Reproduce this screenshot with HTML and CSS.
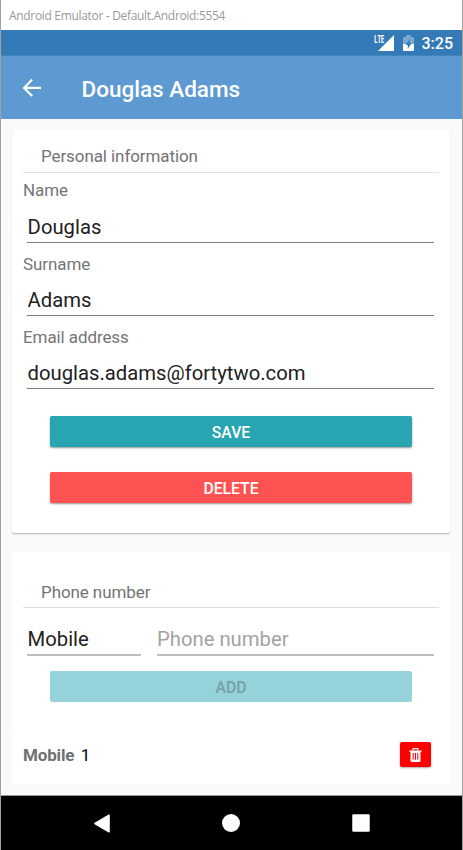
FILE: index.html
```html
<!DOCTYPE html>
<html lang="en">
<head>
<meta charset="utf-8">
<title>Android Emulator - Default.Android:5554</title>
<link rel="stylesheet" href="styles.css">
</head>
<body>
<div class="window">
  <div class="titlebar"><span class="titlebar-text">Android Emulator - Default.Android:5554</span></div>
  <div class="statusbar">
    <span class="signal">
      <svg class="signal-icon" width="17" height="17" viewBox="0 0 17 17"><path d="M17 1v16H1z" fill="#fff"/></svg>
      <span class="lte">LTE</span>
    </span>
    <svg class="battery" width="11" height="16" viewBox="0 0 11 16">
      <path d="M3 0h5v2h2a1 1 0 0 1 1 1v6H0V3a1 1 0 0 1 1-1h2z" fill="#7aa8d1"/>
      <path d="M0 9h11v6a1 1 0 0 1-1 1H1a1 1 0 0 1-1-1z" fill="#fff"/>
      <path d="M6.6 4L2.6 10h2.2v4l3.8-6H6.6z" fill="#337ab7"/>
    </svg>
    <span class="clock">3:25</span>
  </div>
  <header class="appbar">
    <svg class="back" width="20" height="20" viewBox="0 0 20 20"><path d="M10.2 1.4L2 9.9l8.2 8.2M2.2 9.9H19" fill="none" stroke="#fff" stroke-width="2.1"/></svg>
    <h1 class="title">Douglas Adams</h1>
  </header>
  <main class="content">
    <section class="card personal">
      <h2 class="heading">Personal information</h2>
      <label class="field"><span class="label">Name</span><input class="input" value="Douglas"></label>
      <label class="field"><span class="label">Surname</span><input class="input" value="Adams"></label>
      <label class="field"><span class="label">Email address</span><input class="input" value="douglas.adams@fortytwo.com"></label>
      <button class="button save">SAVE</button>
      <button class="button delete">DELETE</button>
    </section>
    <section class="card phone">
      <h2 class="heading">Phone number</h2>
      <div class="phone-row">
        <input class="input type" value="Mobile">
        <input class="input number" placeholder="Phone number">
      </div>
      <button class="button add" disabled>ADD</button>
    </section>
    <div class="entry">
      <span class="entry-type">Mobile</span>
      <span class="entry-number">1</span>
      <button class="trash" aria-label="Remove">
        <svg width="13" height="14" viewBox="0 0 13 14">
          <path d="M4 2.6V1.2Q4 .6 4.6.6h3.8q.6 0 .6.6v1.4" fill="none" stroke="#fff" stroke-width="1.2"/>
          <path d="M.3 2.5h12.4v1.3h-1.2v8.6q0 1.6-1.6 1.6H3.1q-1.6 0-1.6-1.6V3.8H.3z" fill="#fff"/>
          <path d="M4.2 5v6.8M6.5 5v6.8M8.8 5v6.8" stroke="#f00" stroke-width="1"/>
        </svg>
      </button>
    </div>
  </main>
  <nav class="navbar">
    <svg width="16" height="19" viewBox="0 0 16 19"><path d="M15 1.2v16.6L1 9.5z" fill="#fff" stroke="#fff" stroke-width="1.6" stroke-linejoin="round"/></svg>
    <svg width="19" height="19" viewBox="0 0 19 19"><circle cx="9" cy="9" r="9" fill="#fff"/></svg>
    <svg width="18" height="18" viewBox="0 0 18 18"><rect width="17.5" height="17.5" x=".25" y=".25" rx="1.2" fill="#fff"/></svg>
  </nav>
</div>
</body>
</html>
```

FILE: styles.css
```css
* { box-sizing: border-box; }
body { margin: 0; font-family: Roboto, "Liberation Sans", sans-serif; background: #fff; }
.window {
  width: 463px; height: 850px; overflow: hidden;
  display: flex; flex-direction: column;
  border: solid #a0a0a0; border-width: 0 1px;
}
.titlebar { height: 30px; padding-left: 8px; background: #fff; }
.titlebar-text {
  display: inline-block; white-space: nowrap;
  font: 12px/31px "Open Sans", sans-serif; color: #999; letter-spacing: -0.32px;
}
.statusbar {
  height: 26px; padding-right: 9px; background: #337ab7; color: #fff;
  display: flex; justify-content: flex-end; align-items: center;
  border-bottom: 1px solid #4284be;
}
.signal { position: relative; width: 21px; height: 17px; margin-right: 9px; display: flex; justify-content: flex-end; }
.lte { position: absolute; left: 1px; top: 0; font: 700 10px/10px "Open Sans", sans-serif; letter-spacing: -0.2px; transform: scaleX(.62); transform-origin: left; }
.battery { margin-right: 8px; }
.clock { font-size: 16px; font-weight: 500; line-height: 26px; padding-top: 2px; }
.appbar { height: 63px; padding-left: 21px; background: #5d9ad1; display: flex; align-items: center; }
.back { margin-right: 39.5px; }
.title { margin: 2px 0 0; color: #fff; font-size: 22.5px; font-weight: 500; line-height: 30px; }
.content { height: 677px; padding: 11px 12px 0 11px; background: #fafafa; border-bottom: 1px solid #999; }
.card { padding: 0 11px; background: #fff; border-radius: 2px; }
.personal { height: 403px; padding-top: 12px; margin-bottom: 18px; box-shadow: 0 1px 1px rgba(0,0,0,.22), 0 2px 2px rgba(0,0,0,.05); }
.phone { height: 180px; padding-top: 26px; }
.heading {
  margin: 0; height: 31px; padding-left: 18px; border-bottom: 1px solid #e0e0e0;
  font-size: 17px; font-weight: 400; line-height: 29px; letter-spacing: -0.09px; color: #737376;
}
.phone .heading { line-height: 30px; }
.field { display: block; height: 70px; margin-bottom: 3px; padding-top: 6px; }
.label { display: block; height: 22px; margin-bottom: 10px; font-size: 17px; line-height: 22px; letter-spacing: -0.09px; color: #757578; }
.field + .field .label { line-height: 24px; }
.input {
  display: block; width: 407px; height: 32px; margin: 0 0 0 4px; padding: 0 0 0 0.6px;
  border: 0; border-bottom: 1px solid #7e7e7e; border-radius: 0; outline: 0;
  background: none; font: 20.25px Roboto, sans-serif; color: #212121;
}
.input::placeholder { color: #a3a3a3; opacity: 1; }
.button {
  display: block; width: 362px; height: 31px; margin: 0 27px; padding: 2px 0 0; border: 0; border-radius: 2px;
  font: 500 15.75px Roboto, sans-serif; color: #fff;
  box-shadow: 0 1px 2px rgba(0,0,0,.42);
}
.save { margin-top: 27px; background: #29a4b1; }
.delete { margin-top: 25px; background: #ff5252; }
.phone-row { display: flex; gap: 16px; padding: 16px 0 0 4px; }
.phone-row .input { margin: 0; border-bottom: 2px solid #bdbdbd; }
.phone-row .type { width: 114px; }
.phone-row .number { width: 277px; padding-left: 0; }
.add { margin-top: 15px; background: #95d2d9; color: #75a0a6; box-shadow: none; }
.entry { height: 53px; padding: 0 19px 6px 11px; background: #fff; display: flex; align-items: center; }
.entry-type { font-size: 17px; font-weight: 700; letter-spacing: -0.15px; color: #707073; margin-right: 6.5px; }
.entry-number { font-size: 17px; color: #000; }
.trash {
  width: 31px; height: 25px; margin: 0 0 0 auto; padding: 0; border: 0; border-radius: 2px;
  display: flex; align-items: center; justify-content: center;
  background: #f00; box-shadow: 0 1px 2px rgba(0,0,0,.35);
}
.navbar { height: 54px; padding: 0 92px 0 93px; background: #000; display: flex; align-items: center; justify-content: space-between; }
```
